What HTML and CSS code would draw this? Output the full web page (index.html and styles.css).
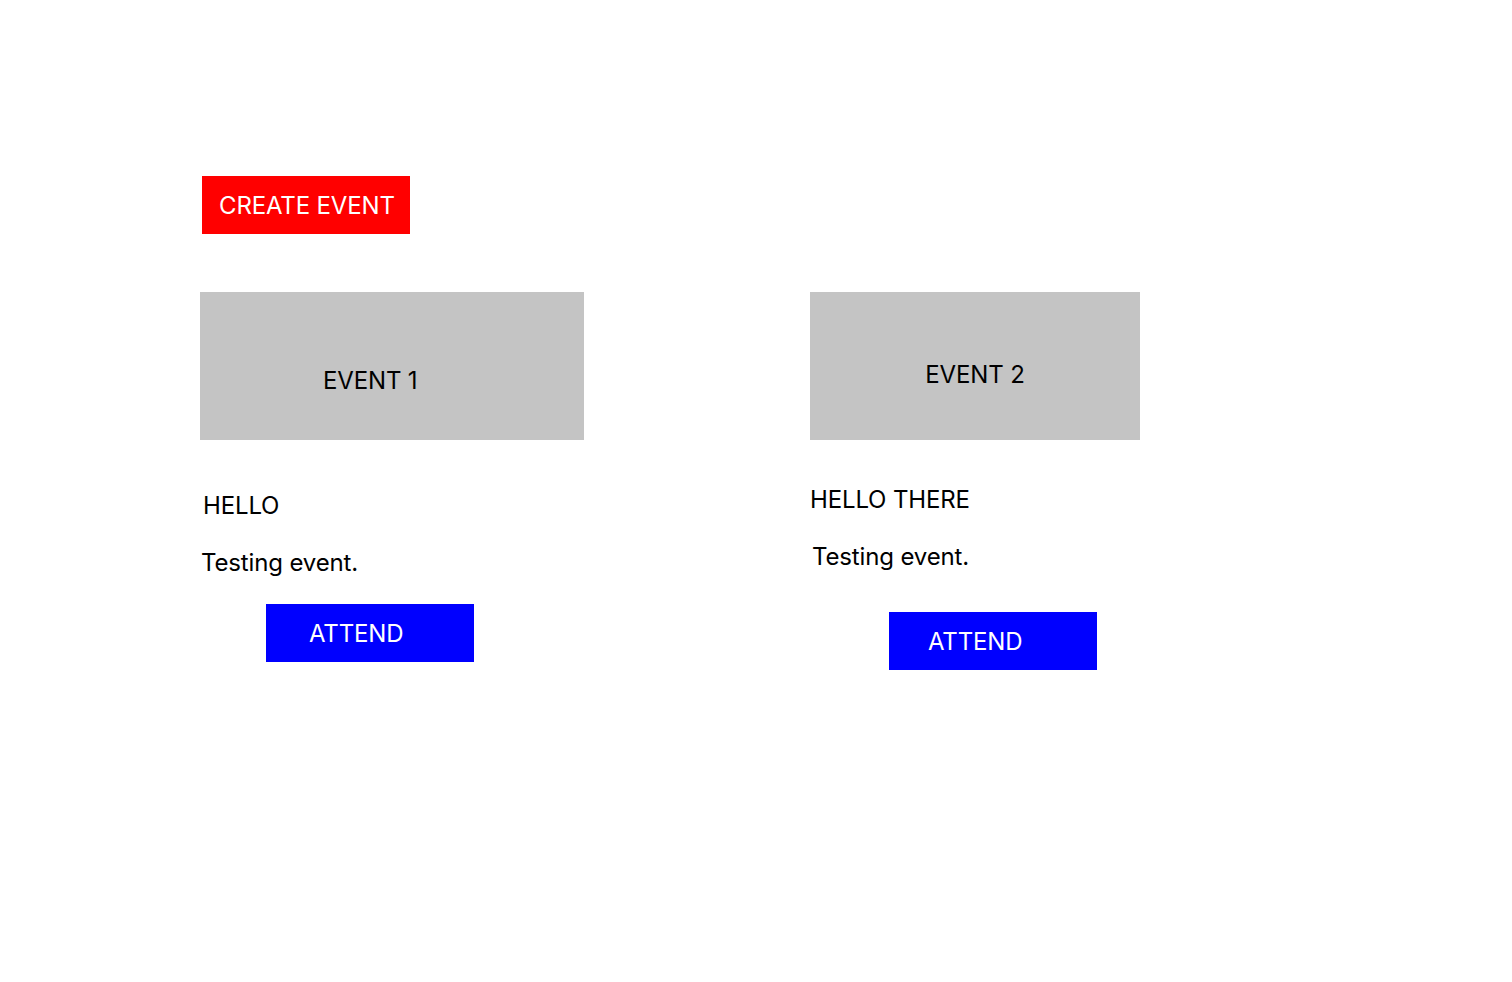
FILE: index.html
```html
<!DOCTYPE html>
<html lang="en">
<head>
<meta charset="utf-8">
<title>Events</title>
<link rel="stylesheet" href="styles.css">
</head>
<body>
<main class="page">
  <button class="btn btn-create">CREATE EVENT</button>
  <section class="events">
    <article class="card card-1">
      <div class="banner"><span>EVENT 1</span></div>
      <h2 class="title">HELLO</h2>
      <p class="desc">Testing event.</p>
      <button class="btn btn-attend">ATTEND</button>
    </article>
    <article class="card card-2">
      <div class="banner"><span>EVENT 2</span></div>
      <h2 class="title">HELLO THERE</h2>
      <p class="desc">Testing event.</p>
      <button class="btn btn-attend">ATTEND</button>
    </article>
  </section>
</main>
</body>
</html>
```

FILE: styles.css
```css
* { box-sizing: border-box; }
html, body { margin: 0; padding: 0; background: #ffffff; }
body {
  font-family: Inter, "Noto Sans", sans-serif;
  font-size: 24px;
  line-height: 29px;
  letter-spacing: -0.15px;
  color: #000000;
}
.page {
  padding: 176px 0 0 200px;
}
.btn {
  display: flex;
  align-items: center;
  width: 208px;
  height: 58px;
  border: 0;
  margin: 0;
  color: #ffffff;
  font: inherit;
  letter-spacing: inherit;
  text-align: left;
  cursor: pointer;
}
.btn-create {
  margin-left: 2px;
  padding-left: 17px;
  background: #ff0000;
}
.btn-attend {
  background: #0000ff;
}
.events {
  display: flex;
  gap: 226px;
  margin-top: 58px;
}
.card { display: flex; flex-direction: column; align-items: flex-start; }
.card-1 { width: 384px; }
.card-2 { width: 330px; }
.banner {
  display: flex;
  align-items: center;
  width: 100%;
  height: 148px;
  background: #c4c4c4;
}
.card-1 .banner { padding: 28px 0 0 123px; }
.card-2 .banner { justify-content: center; padding-top: 16px; }
.title, .desc {
  margin: 0;
  font-size: 24px;
  font-weight: 400;
  line-height: 29px;
}
.card-1 .title { margin: 51px 0 0 3px; }
.card-1 .desc { margin: 28px 0 0 1px; }
.card-1 .btn-attend { margin: 27px 0 0 66px; padding-left: 43px; }
.card-2 .title { margin: 45px 0 0 0; }
.card-2 .desc { margin: 28px 0 0 2px; }
.card-2 .btn-attend { margin: 41px 0 0 79px; padding-left: 39px; }
```
